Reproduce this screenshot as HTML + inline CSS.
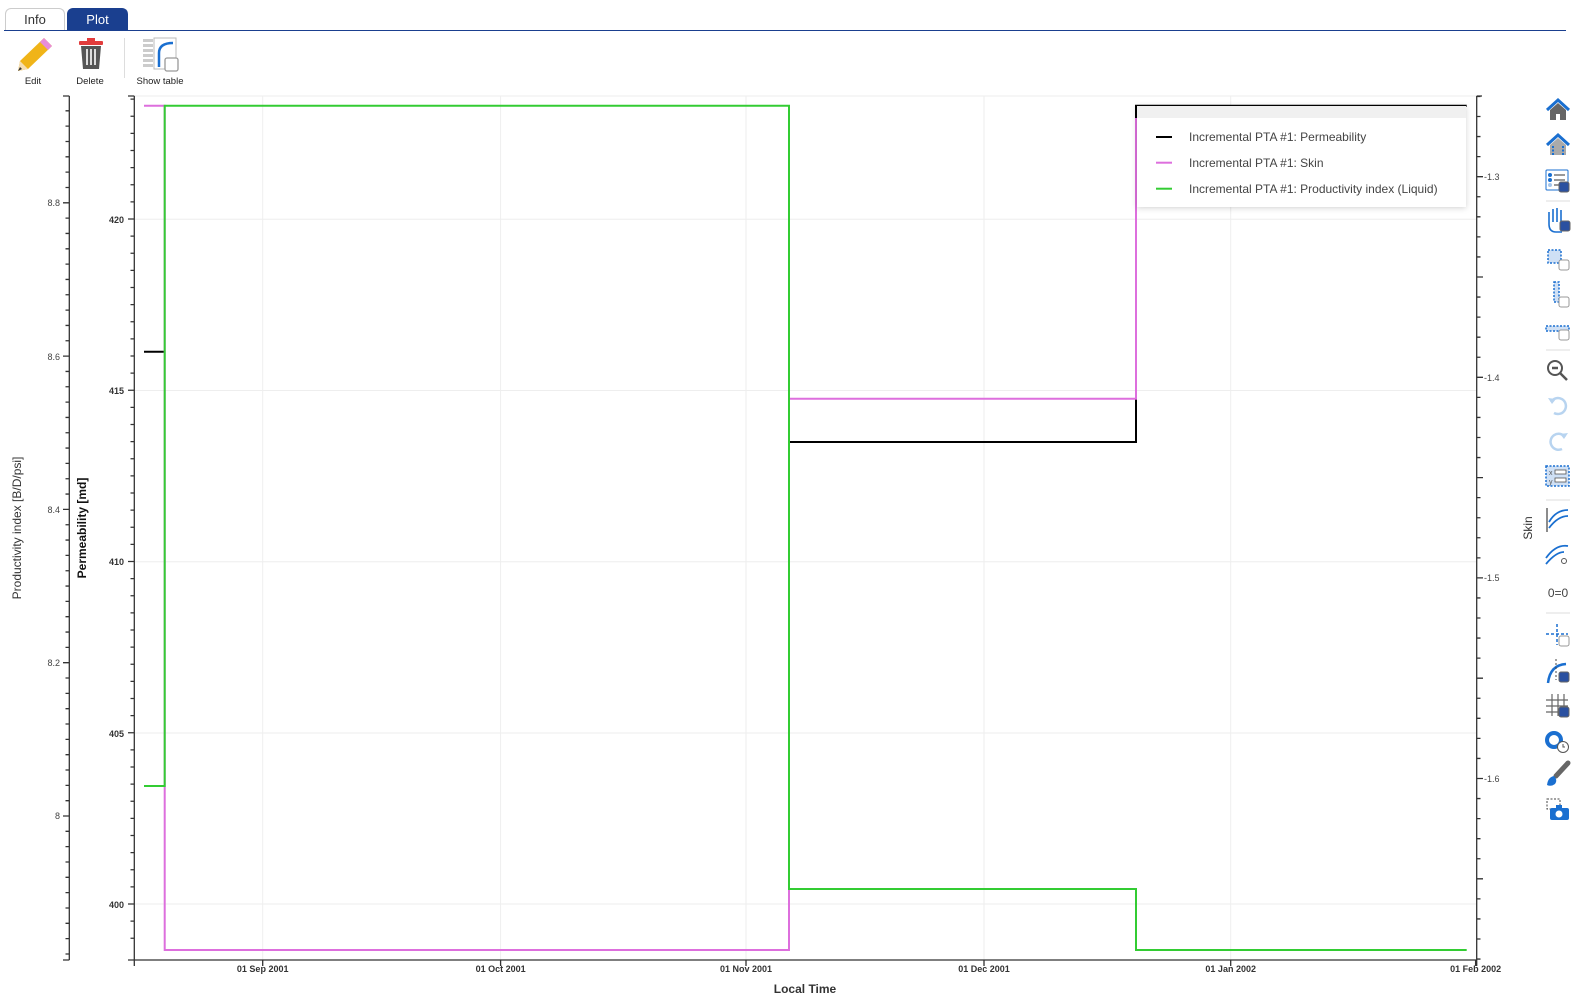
<!DOCTYPE html>
<html><head><meta charset="utf-8"><style>
body{margin:0;width:1582px;height:1004px;background:#fff;font-family:"Liberation Sans",sans-serif;overflow:hidden;position:relative}
.tab{position:absolute;top:8px;height:22px;border:1px solid #ccc;border-bottom:none;border-radius:6px 6px 0 0;font-size:13px;text-align:center;line-height:22px;color:#333}
.lbl{position:absolute;font-size:9.5px;color:#222;text-align:center}
svg text{font-family:"Liberation Sans",sans-serif}
</style></head><body>
<div class="tab" style="left:5px;width:58px;">Info</div>
<div class="tab" style="left:67px;width:59px;background:#1a3f8f;border-color:#1a3f8f;color:#fff">Plot</div>
<div style="position:absolute;left:4px;top:30px;width:1562px;height:1px;background:#1a3f8f"></div>
<div style="position:absolute;left:124px;top:38px;width:1px;height:40px;background:#ddd"></div>
<svg style="position:absolute;left:14px;top:36px" width="40" height="36" viewBox="0 0 40 36">
<path d="M30 2 L38 10 L14 33 L4 35 L6 25 Z" fill="#f0b418"/><path d="M30 2 L38 10 L34 14 L26 6Z" fill="#e88cd8"/><path d="M6 25 L14 33 L4 35Z" fill="#f5deb3"/><path d="M4 35 L6 31 L8 33Z" fill="#333"/></svg>
<svg style="position:absolute;left:77px;top:38px" width="28" height="32" viewBox="0 0 28 32">
<rect x="2" y="3" width="24" height="4" rx="1" fill="#e23c3c"/><rect x="10" y="0" width="8" height="4" fill="#e23c3c"/><path d="M4 8 H24 L22 31 H6Z" fill="#555"/><rect x="9" y="11" width="2" height="16" fill="#ddd"/><rect x="13" y="11" width="2" height="16" fill="#ddd"/><rect x="17" y="11" width="2" height="16" fill="#ddd"/></svg>
<svg style="position:absolute;left:143px;top:37px" width="40" height="36" viewBox="0 0 40 36">
<g fill="#ccc"><rect x="0" y="2" width="10" height="3"/><rect x="0" y="7" width="10" height="3"/><rect x="0" y="12" width="10" height="3"/><rect x="0" y="17" width="10" height="3"/><rect x="0" y="22" width="10" height="3"/><rect x="0" y="27" width="10" height="3"/></g>
<rect x="11" y="1" width="22" height="31" fill="#fff" stroke="#bbb"/><path d="M16 30 V16 Q16 6 30 6" fill="none" stroke="#1a6fd0" stroke-width="2.5"/><rect x="22" y="21" width="13" height="13" rx="2" fill="#fff" stroke="#999" stroke-width="1.3"/></svg>
<div class="lbl" style="left:13px;top:76px;width:40px">Edit</div>
<div class="lbl" style="left:70px;top:76px;width:40px">Delete</div>
<div class="lbl" style="left:130px;top:76px;width:60px">Show table</div>

<svg id="p" style="position:absolute;left:0;top:0" width="1582" height="1004">
<g stroke="#eee" stroke-width="1">
<line x1="134" x2="1477" y1="219.3" y2="219.3"/><line x1="134" x2="1477" y1="390.5" y2="390.5"/><line x1="134" x2="1477" y1="561.8" y2="561.8"/><line x1="134" x2="1477" y1="733" y2="733"/><line x1="134" x2="1477" y1="904" y2="904"/><line x1="134" x2="1477" y1="96" y2="96"/>
<line x1="262.7" x2="262.7" y1="96" y2="960"/><line x1="500.6" x2="500.6" y1="96" y2="960"/><line x1="746" x2="746" y1="96" y2="960"/><line x1="984" x2="984" y1="96" y2="960"/><line x1="1230.7" x2="1230.7" y1="96" y2="960"/>
</g>
<g fill="none" stroke-width="2">
<path d="M144 351.7 H164.7" stroke="#000"/>
<path d="M789 442 H1136 V105.7 H1466.7" stroke="#000"/>
<path d="M144 105.7 H164.7 V950 H789 V398.7 H1136 V118" stroke="#dd6fdd"/>
<path d="M144 786 H164.7 V105.7 H789 V889 H1136 V950 H1466.7" stroke="#33cc33"/>
</g>
<g id="ax" stroke="#333" stroke-width="1.3" fill="none"></g>
<g font-size="9" font-weight="bold" fill="#333" text-anchor="end">
<text x="124" y="223">420</text><text x="124" y="394">415</text><text x="124" y="565">410</text><text x="124" y="737">405</text><text x="124" y="908">400</text>
</g>
<g font-size="9" fill="#444" text-anchor="end">
<text x="60" y="206">8.8</text><text x="60" y="360">8.6</text><text x="60" y="513">8.4</text><text x="60" y="666">8.2</text><text x="60" y="819">8</text>
</g>
<g font-size="9" fill="#444">
<text x="1484" y="180">-1.3</text><text x="1484" y="381">-1.4</text><text x="1484" y="581">-1.5</text><text x="1484" y="782">-1.6</text>
</g>
<g font-size="9" font-weight="bold" fill="#333" text-anchor="middle">
<text x="262.7" y="972">01 Sep 2001</text><text x="500.6" y="972">01 Oct 2001</text><text x="746" y="972">01 Nov 2001</text><text x="984" y="972">01 Dec 2001</text><text x="1230.7" y="972">01 Jan 2002</text><text x="1475.6" y="972">01 Feb 2002</text>
</g>
<text x="805" y="993" font-size="12" font-weight="bold" fill="#333" text-anchor="middle">Local Time</text>
<text transform="translate(21,528) rotate(-90)" font-size="12" fill="#333" text-anchor="middle">Productivity index [B/D/psi]</text>
<text transform="translate(86,528) rotate(-90)" font-size="12" font-weight="bold" fill="#111" text-anchor="middle">Permeability [md]</text>
<text transform="translate(1532,528) rotate(-90)" font-size="12" fill="#333" text-anchor="middle">Skin</text>
<rect x="1137" y="106" width="329" height="101" fill="#fff" style="filter:drop-shadow(0 1px 3px rgba(0,0,0,.18))"/>
<rect x="1137" y="106" width="329" height="12" fill="#f0f0f0"/>
<line x1="1156" x2="1172" y1="137" y2="137" stroke="#000" stroke-width="2"/>
<line x1="1156" x2="1172" y1="162.7" y2="162.7" stroke="#dd6fdd" stroke-width="2"/>
<line x1="1156" x2="1172" y1="188.7" y2="188.7" stroke="#33cc33" stroke-width="2"/>
<g font-size="12" fill="#444"><text x="1189" y="141">Incremental PTA #1: Permeability</text><text x="1189" y="167">Incremental PTA #1: Skin</text><text x="1189" y="193">Incremental PTA #1: Productivity index (Liquid)</text></g>

<g transform="translate(1546,0)">
<g stroke="#ddd"><line x1="0" x2="24" y1="201" y2="201"/><line x1="0" x2="24" y1="350" y2="350"/><line x1="0" x2="24" y1="500" y2="500"/><line x1="0" x2="24" y1="613" y2="613"/></g>
<path d="M1 110 L12 100 L23 110" fill="none" stroke="#1a6fd0" stroke-width="3"/><path d="M4 110 V120 H10 V114 H14 V120 H20 V110 L12 103Z" fill="#666"/>
<path d="M1 145 L12 135 L23 145" fill="none" stroke="#1a6fd0" stroke-width="3"/><path d="M4 145 V155 H20 V145 L12 138Z" fill="#aaa"/><path d="M7 146V155M17 146V155" stroke="#1a6fd0" stroke-dasharray="2 1.5" stroke-width="2"/>
<rect x="0" y="170" width="22" height="20" rx="1" fill="#fff" stroke="#1a6fd0"/><g fill="#1a6fd0"><circle cx="4" cy="175" r="2"/><circle cx="4" cy="180" r="2"/><circle cx="4" cy="185" r="2" opacity=".4"/></g><path d="M8 175H19M8 180H19M8 185H13" stroke="#333"/><rect x="13" y="182" width="10" height="10" rx="2" fill="#2a50a0" stroke="#666"/>
<path d="M3 224 V212 M7 222 V209 M11 222 V208 M15 222 V210 M3 224 Q3 232 10 232 H16" fill="none" stroke="#1a6fd0" stroke-width="1.6"/><rect x="14" y="221" width="10" height="10" rx="2" fill="#2a50a0" stroke="#666"/>
<rect x="2" y="250" width="13" height="13" fill="#cfe0f5" stroke="#1a6fd0" stroke-dasharray="2 1.5" stroke-width="1.5"/><rect x="13" y="260" width="10" height="10" rx="2" fill="#fff" stroke="#999"/>
<rect x="8" y="282" width="5" height="20" fill="#cfe0f5" stroke="#1a6fd0" stroke-dasharray="2 1.5" stroke-width="1.5"/><rect x="13" y="297" width="10" height="10" rx="2" fill="#fff" stroke="#999"/>
<rect x="0" y="326" width="23" height="5" fill="#cfe0f5" stroke="#1a6fd0" stroke-dasharray="2 1.5" stroke-width="1.5"/><rect x="13" y="330" width="10" height="10" rx="2" fill="#fff" stroke="#999"/>
<circle cx="9" cy="368" r="7" fill="none" stroke="#555" stroke-width="2"/><path d="M6 368H12M14 373L21 380" stroke="#555" stroke-width="2.5"/>
<path d="M5 402 A8 8 0 1 1 8 413" fill="none" stroke="#b8d4f0" stroke-width="2.5"/><path d="M2 398 L6 404 L10 399Z" fill="#b8d4f0"/>
<path d="M19 437 A8 8 0 1 0 16 449" fill="none" stroke="#b8d4f0" stroke-width="2.5"/><path d="M22 433 L18 439 L14 434Z" fill="#b8d4f0"/>
<rect x="0" y="466" width="23" height="20" fill="#cfe0f5" stroke="#1a6fd0" stroke-dasharray="2 1.5" stroke-width="1.5"/><text x="3" y="475" font-size="7" fill="#555">x</text><text x="3" y="484" font-size="7" fill="#555">y</text><rect x="9" y="470" width="11" height="4" fill="#fff" stroke="#555" stroke-width=".8"/><rect x="9" y="478" width="11" height="4" fill="#fff" stroke="#555" stroke-width=".8"/>
<path d="M1 508V532" stroke="#666" stroke-width="1.5"/><path d="M3 522 Q10 510 22 510M3 528 Q12 516 22 516" fill="none" stroke="#1a6fd0" stroke-width="1.8"/>
<path d="M0 558 Q10 544 22 546M0 564 Q10 552 18 552" fill="none" stroke="#1a6fd0" stroke-width="1.8"/><circle cx="18" cy="561" r="2.5" fill="none" stroke="#555"/>
<text x="12" y="597" font-size="12" fill="#444" text-anchor="middle">0=0</text>
<path d="M11 624V645M0 634H22" stroke="#1a6fd0" stroke-width="1.5" stroke-dasharray="3 2"/><rect x="13" y="636" width="10" height="10" rx="2" fill="#fff" stroke="#999"/>
<path d="M2 683 Q4 665 20 664" fill="none" stroke="#1a6fd0" stroke-width="2.5"/><path d="M10 659V680" stroke="#444" stroke-dasharray="2 2"/><rect x="13" y="672" width="10" height="10" rx="2" fill="#2a50a0" stroke="#666"/>
<path d="M0 700H22M0 706H22M0 712H22M6 694V716M12 694V716M18 694V716" stroke="#666" stroke-width="1.2"/><rect x="13" y="707" width="10" height="10" rx="2" fill="#2a50a0" stroke="#666"/>
<circle cx="8" cy="740" r="7" fill="none" stroke="#1a6fd0" stroke-width="4"/><circle cx="17" cy="747" r="5.5" fill="#fff" stroke="#555"/><path d="M17 744V747H19" stroke="#555" fill="none"/>
<path d="M22 763 L10 776" stroke="#666" stroke-width="5" stroke-linecap="round"/><path d="M1 785 Q2 777 8 776 Q12 780 9 784 Q5 787 1 785Z" fill="#1a6fd0"/>
<rect x="1" y="799" width="13" height="10" fill="none" stroke="#444" stroke-dasharray="2 1.5"/><rect x="4" y="808" width="19" height="12" rx="2" fill="#1a6fd0"/><circle cx="13" cy="814" r="3.5" fill="#fff"/><rect x="10" y="805" width="6" height="4" fill="#1a6fd0"/>
</g>
</svg>
<script>
var g=document.getElementById('ax'),d='';
function L(x1,y1,x2,y2){d+='M'+x1+' '+y1+'L'+x2+' '+y2;}
L(69.3,96,69.3,960);L(63,96,69.3,96);L(63,960,69.3,960);
L(134.3,96,134.3,966);L(128,96,134.3,96);L(128,960,1477,960);
L(1476.7,96,1476.7,966);L(1476.7,96,1482,96);
for(var v=399;v<=424;v+=0.5){var y=904-(v-400)*34.25;if(y<96||y>960)continue;var maj=(v%5==0);L(maj?128:130.5,y,134.3,y);}
for(var i=-10;i<=60;i++){var y=816-i*15.33;if(y<96||y>960)continue;var maj=(i%10==0);L(maj?63:65.5,y,69.3,y);}
for(var i=-10;i<=50;i++){var y=176.7+i*20.06;if(y<96||y>960)continue;var maj=(i%5==0);L(1476.7,y,maj?1483:1480.5,y);}
[262.7,500.6,746,984,1230.7,1475.6].forEach(function(x){L(x,960,x,966);});
var p=document.createElementNS('http://www.w3.org/2000/svg','path');p.setAttribute('d',d);g.appendChild(p);
</script>
</body></html>
